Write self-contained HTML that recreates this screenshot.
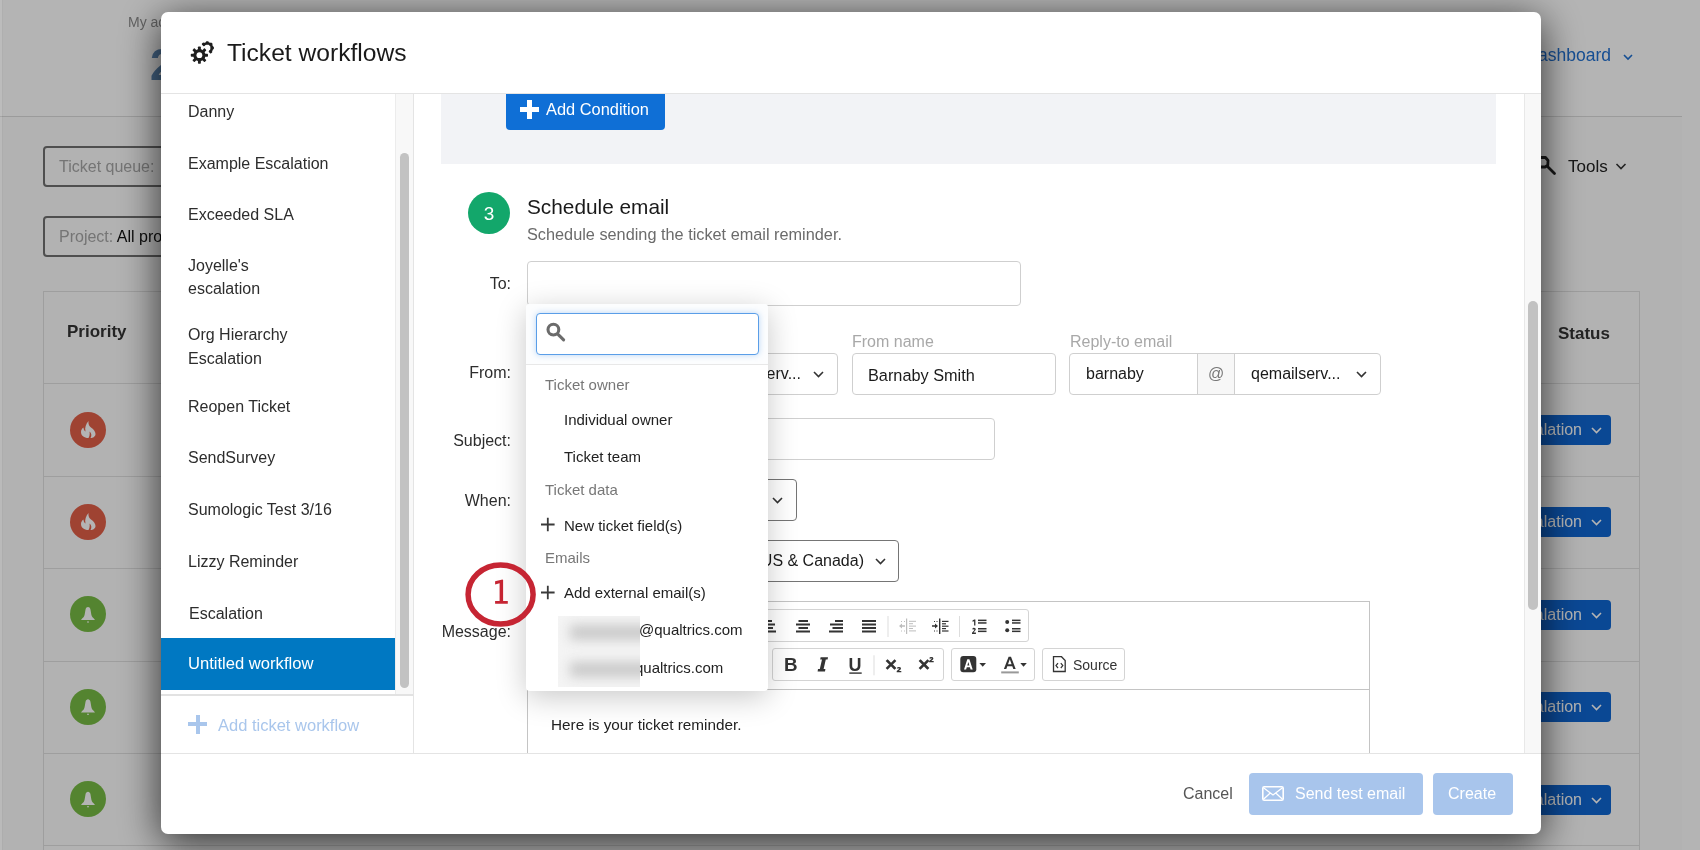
<!DOCTYPE html>
<html><head><meta charset="utf-8">
<style>
#mc,#bg{will-change:transform}
*{box-sizing:border-box;margin:0;padding:0}
html,body{width:1700px;height:850px;overflow:hidden}
body{font-family:"Liberation Sans",sans-serif;background:#fff;position:relative;color:#2b2b2b}
.a{position:absolute}
.t{position:absolute;white-space:nowrap;line-height:1}
#bg{position:absolute;left:0;top:0;width:1700px;height:850px;background:#fff}
#ov{position:absolute;left:0;top:0;width:1700px;height:850px;background:rgba(0,0,0,0.295)}
#modal{position:absolute;left:161px;top:12px;width:1380px;height:822px;background:#fff;border-radius:7px;box-shadow:0 8px 40px rgba(0,0,0,0.75)}
.side{font-size:16px;color:#2d2d2d;left:188px;margin-top:1px}
.lbl{font-size:16px;color:#2d2d2d;text-align:right;width:100px;left:411px}
.inp{position:absolute;border:1px solid #cfcfcf;border-radius:4px;background:#fff}
.dd{position:absolute;border:1px solid #757575;border-radius:4px;background:#fff}
.gl{font-size:15px;color:#777;left:545px}
.it{font-size:15px;color:#222;left:564px}
.chev{position:absolute}
.tb{position:absolute;border:1px solid #d4d4d4;border-radius:3px;background:#fff}
</style></head>
<body>
<div id="bg">
  
  <div class="t" style="left:128px;top:15px;font-size:14px;color:#8c8c8c">My account</div>
  <div class="t" style="left:150px;top:43px;font-size:44px;color:#5f8bb8;font-weight:bold">2</div>
  <div class="a" style="left:0;top:117px;width:1682px;height:733px;background:#fcfcfc"></div>
  <div class="a" style="left:0;top:116px;width:1682px;height:1px;background:#dcdcdc"></div>
  <div class="a" style="left:43px;top:146px;width:300px;height:41px;border:2px solid #707070;border-radius:4px"></div>
  <div class="t" style="left:59px;top:159px;font-size:16px;color:#a6a6a6">Ticket queue:</div>
  <div class="a" style="left:43px;top:216px;width:300px;height:41px;border:2px solid #707070;border-radius:4px"></div>
  <div class="t" style="left:59px;top:229px;font-size:16px;color:#a6a6a6">Project: <span style="color:#111">All projects</span></div>
  <div class="a" style="left:43px;top:291px;width:1597px;height:600px;border:1px solid #e0e0e0"></div>
  <div class="t" style="left:67px;top:323px;font-size:17px;font-weight:bold;color:#333">Priority</div>
  <div class="t" style="left:1558px;top:325px;font-size:17px;font-weight:bold;color:#333">Status</div>
  <div class="a" style="left:43px;top:383px;width:1597px;height:1px;background:#e0e0e0"></div>
  <div class="a" style="left:43px;top:476px;width:1597px;height:1px;background:#e0e0e0"></div>
  <div class="a" style="left:43px;top:568px;width:1597px;height:1px;background:#e0e0e0"></div>
  <div class="a" style="left:43px;top:661px;width:1597px;height:1px;background:#e0e0e0"></div>
  <div class="a" style="left:43px;top:753px;width:1597px;height:1px;background:#e0e0e0"></div>
  <div class="a" style="left:43px;top:845px;width:1597px;height:1px;background:#e0e0e0"></div>
  <div class="a" style="left:70px;top:412px;width:36px;height:36px;border-radius:50%;background:#e25f48"></div>
  <div class="a" style="left:70px;top:504px;width:36px;height:36px;border-radius:50%;background:#e25f48"></div>
  <div class="a" style="left:70px;top:596px;width:36px;height:36px;border-radius:50%;background:#78bc45"></div>
  <div class="a" style="left:70px;top:689px;width:36px;height:36px;border-radius:50%;background:#78bc45"></div>
  <div class="a" style="left:70px;top:781px;width:36px;height:36px;border-radius:50%;background:#78bc45"></div>
  <div class="t" style="left:1411px;top:47px;width:200px;text-align:right;font-size:17.5px;color:#1f6fd0">dashboard</div>
  <div class="t" style="left:1568px;top:158px;font-size:17px;color:#222">Tools</div>
  <div class="a" style="left:1480px;top:415px;width:131px;height:30px;background:#0f66d2;border-radius:4px"></div>
  <div class="a" style="left:1480px;top:507px;width:131px;height:30px;background:#0f66d2;border-radius:4px"></div>
  <div class="a" style="left:1480px;top:600px;width:131px;height:30px;background:#0f66d2;border-radius:4px"></div>
  <div class="a" style="left:1480px;top:692px;width:131px;height:30px;background:#0f66d2;border-radius:4px"></div>
  <div class="a" style="left:1480px;top:785px;width:131px;height:30px;background:#0f66d2;border-radius:4px"></div>

  <svg class="a" style="left:0;top:0" width="1700" height="850" viewBox="0 0 1700 850">
    <path d="M1624 55 L1628 59 L1632 55" fill="none" stroke="#1f6fd0" stroke-width="1.6"/>
    <path d="M1616.5 164 L1621 168.5 L1625.5 164" fill="none" stroke="#333" stroke-width="1.6"/>
    <g stroke="#222" stroke-width="2.8" fill="none" stroke-linejoin="round">
      <path d="M1539 157.5 L1545.5 157.5 L1548 160.5 L1547.8 165.2 L1545 167 L1538 167"/>
      <path d="M1547.5 166.5 L1554.5 173.5" stroke-linecap="round"/>
    </g>
    <g fill="#fff">
      <path transform="translate(81 421)" d="M7.5 17 C3 17 0 14.5 0 11 C0 9 1 7.5 2.5 6.5 C2.5 8.5 3.5 10 4.5 10.5 C3.5 6.5 5 3 7.5 0 C7 3.5 8.5 5.5 10 6.5 C13 8.5 14.5 11 14.5 13 C14.5 15.5 12 17 9.5 17 C11 15 10.5 12 8.5 10.5 C9 13 8.5 15.5 7.5 17 Z"/>
      <path transform="translate(81 513)" d="M7.5 17 C3 17 0 14.5 0 11 C0 9 1 7.5 2.5 6.5 C2.5 8.5 3.5 10 4.5 10.5 C3.5 6.5 5 3 7.5 0 C7 3.5 8.5 5.5 10 6.5 C13 8.5 14.5 11 14.5 13 C14.5 15.5 12 17 9.5 17 C11 15 10.5 12 8.5 10.5 C9 13 8.5 15.5 7.5 17 Z"/>
      <path transform="translate(81 606.6)" d="M7 0.3 C8.2 0.3 9 1.2 9.4 2.6 C10 5 10 8 11 10 C11.8 11.5 13.5 12.3 14 13.5 L0 13.5 C0.5 12.3 2.2 11.5 3 10 C4 8 4 5 4.6 2.6 C5 1.2 5.8 0.3 7 0.3 Z M6 14.8 L8 14.8 L8 15.8 L6 15.8 Z"/>
      <path transform="translate(81 699)" d="M7 0.3 C8.2 0.3 9 1.2 9.4 2.6 C10 5 10 8 11 10 C11.8 11.5 13.5 12.3 14 13.5 L0 13.5 C0.5 12.3 2.2 11.5 3 10 C4 8 4 5 4.6 2.6 C5 1.2 5.8 0.3 7 0.3 Z M6 14.8 L8 14.8 L8 15.8 L6 15.8 Z"/>
      <path transform="translate(81 791.5)" d="M7 0.3 C8.2 0.3 9 1.2 9.4 2.6 C10 5 10 8 11 10 C11.8 11.5 13.5 12.3 14 13.5 L0 13.5 C0.5 12.3 2.2 11.5 3 10 C4 8 4 5 4.6 2.6 C5 1.2 5.8 0.3 7 0.3 Z M6 14.8 L8 14.8 L8 15.8 L6 15.8 Z"/>
    </g>
    <g fill="none" stroke="#fff" stroke-width="1.6">
      <path d="M1592 428 L1596.5 432.5 L1601 428"/>
      <path d="M1592 520 L1596.5 524.5 L1601 520"/>
      <path d="M1592 613 L1596.5 617.5 L1601 613"/>
      <path d="M1592 705 L1596.5 709.5 L1601 705"/>
      <path d="M1592 798 L1596.5 802.5 L1601 798"/>
    </g>
  </svg>
  <div class="t" style="left:1482px;top:422px;width:100px;text-align:right;font-size:16px;color:#fff">Escalation</div>
  <div class="t" style="left:1482px;top:514px;width:100px;text-align:right;font-size:16px;color:#fff">Escalation</div>
  <div class="t" style="left:1482px;top:607px;width:100px;text-align:right;font-size:16px;color:#fff">Escalation</div>
  <div class="t" style="left:1482px;top:699px;width:100px;text-align:right;font-size:16px;color:#fff">Escalation</div>
  <div class="t" style="left:1482px;top:792px;width:100px;text-align:right;font-size:16px;color:#fff">Escalation</div>
</div>
<div id="ov"></div>
<div class="a" style="left:0;top:0;width:2px;height:850px;background:rgba(255,255,255,0.1)"></div><div class="a" style="left:2px;top:0;width:1px;height:850px;background:rgba(0,0,0,0.03)"></div>

<div id="modal"></div>
<!-- ===== modal content (page coords) ===== -->
<div id="mc">
  <!-- header -->
  <div class="t" style="left:227px;top:41px;font-size:24.6px;color:#1a1a1a">Ticket workflows</div>
  <div class="a" style="left:161px;top:93px;width:1380px;height:1px;background:#e4e4e4"></div>

  <!-- sidebar -->
  <div class="a" style="left:395px;top:94px;width:18px;height:601px;background:#f8f8f8;border-left:1px solid #ececec"></div>
  <div class="a" style="left:400px;top:153px;width:9px;height:535px;background:#c2c2c2;border-radius:5px"></div>
  <div class="a" style="left:413px;top:94px;width:1px;height:659px;background:#e4e4e4"></div>
  <div class="t side" style="top:103px">Danny</div>
  <div class="t side" style="top:155px">Example Escalation</div>
  <div class="t side" style="top:206px">Exceeded SLA</div>
  <div class="t side" style="top:257px">Joyelle's</div>
  <div class="t side" style="top:280px">escalation</div>
  <div class="t side" style="top:326px">Org Hierarchy</div>
  <div class="t side" style="top:350px">Escalation</div>
  <div class="t side" style="top:398px">Reopen Ticket</div>
  <div class="t side" style="top:449px">SendSurvey</div>
  <div class="t side" style="top:501px">Sumologic Test 3/16</div>
  <div class="t side" style="top:553px">Lizzy Reminder</div>
  <div class="t side" style="top:605px;left:189px">Escalation</div>
  <div class="a" style="left:161px;top:638px;width:234px;height:52px;background:#0078c2"></div>
  <div class="t side" style="top:655px;color:#fff;font-size:16.6px">Untitled workflow</div>
  <div class="a" style="left:161px;top:694px;width:252px;height:2px;background:#e2e2e2"></div>
  <div class="a" style="left:188px;top:722px;width:19px;height:4px;background:#a9c6ec"></div>
  <div class="a" style="left:196px;top:715px;width:4px;height:19px;background:#a9c6ec"></div>
  <div class="t" style="left:218px;top:717px;font-size:16.5px;color:#a9c6ec">Add ticket workflow</div>

  <!-- main scrollbar -->
  <div class="a" style="left:1524px;top:94px;width:17px;height:659px;background:#f8f8f8;border-left:1px solid #e8e8e8"></div>
  <div class="a" style="left:1528px;top:301px;width:10px;height:309px;background:#c2c2c2;border-radius:5px"></div>

  <!-- condition box -->
  <div class="a" style="left:441px;top:94px;width:1055px;height:70px;background:#f2f3f6"></div>
  <div class="a" style="left:506px;top:94px;width:159px;height:36px;background:#0f6fd6;border-radius:0 0 4px 4px"></div>
  <div class="a" style="left:520px;top:107px;width:19px;height:5px;background:#fff"></div>
  <div class="a" style="left:527px;top:100px;width:5px;height:19px;background:#fff"></div>
  <div class="t" style="left:546px;top:101px;font-size:16.4px;color:#fff">Add Condition</div>

  <!-- step 3 -->
  <div class="a" style="left:468px;top:192px;width:42px;height:42px;border-radius:50%;background:#13a76b"></div>
  <div class="t" style="left:468px;top:204px;width:42px;text-align:center;font-size:19px;color:#fff">3</div>
  <div class="t" style="left:527px;top:197px;font-size:20.8px;color:#1a1a1a">Schedule email</div>
  <div class="t" style="left:527px;top:226px;font-size:16.3px;color:#6b6b6b">Schedule sending the ticket email reminder.</div>

  <!-- To -->
  <div class="t lbl" style="top:276px">To:</div>
  <div class="inp" style="left:527px;top:261px;width:494px;height:45px"></div>

  <!-- From -->
  <div class="t lbl" style="top:365px">From:</div>
  <div class="inp" style="left:527px;top:353px;width:311px;height:42px"></div>
  <div class="t" style="left:601px;top:366px;width:200px;text-align:right;font-size:16px;color:#1a1a1a">qemailserv...</div>
  <svg class="a" style="left:812px;top:370px" width="13" height="9" viewBox="0 0 13 9"><path d="M2 2 L6.5 6.5 L11 2" fill="none" stroke="#333" stroke-width="1.6"/></svg>

  <div class="t" style="left:852px;top:334px;font-size:16px;color:#a8a8a8">From name</div>
  <div class="inp" style="left:852px;top:353px;width:204px;height:42px"></div>
  <div class="t" style="left:868px;top:367px;font-size:16.3px;color:#1a1a1a">Barnaby Smith</div>

  <div class="t" style="left:1070px;top:334px;font-size:16px;color:#a8a8a8">Reply-to email</div>
  <div class="inp" style="left:1069px;top:353px;width:312px;height:42px"></div>
  <div class="a" style="left:1197px;top:354px;width:38px;height:40px;background:#f7f7f7;border-left:1px solid #cfcfcf;border-right:1px solid #cfcfcf"></div>
  <div class="t" style="left:1197px;top:366px;width:38px;text-align:center;font-size:16px;color:#777">@</div>
  <div class="t" style="left:1086px;top:366px;font-size:16px;color:#1a1a1a">barnaby</div>
  <div class="t" style="left:1251px;top:366px;font-size:16px;color:#1a1a1a">qemailserv...</div>
  <svg class="a" style="left:1355px;top:370px" width="13" height="9" viewBox="0 0 13 9"><path d="M2 2 L6.5 6.5 L11 2" fill="none" stroke="#333" stroke-width="1.6"/></svg>

  <!-- Subject -->
  <div class="t lbl" style="top:433px">Subject:</div>
  <div class="inp" style="left:527px;top:418px;width:468px;height:42px"></div>

  <!-- When -->
  <div class="t lbl" style="top:493px">When:</div>
  <div class="dd" style="left:527px;top:479px;width:270px;height:42px"></div>
  <svg class="a" style="left:771px;top:496px" width="13" height="9" viewBox="0 0 13 9"><path d="M2 2 L6.5 6.5 L11 2" fill="none" stroke="#333" stroke-width="1.6"/></svg>
  <div class="dd" style="left:527px;top:540px;width:372px;height:42px"></div>
  <div class="t" style="left:664px;top:553px;width:200px;text-align:right;font-size:16px;color:#1a1a1a">(US &amp; Canada)</div>
  <svg class="a" style="left:874px;top:557px" width="13" height="9" viewBox="0 0 13 9"><path d="M2 2 L6.5 6.5 L11 2" fill="none" stroke="#333" stroke-width="1.6"/></svg>

  <!-- Message -->
  <div class="t lbl" style="top:624px">Message:</div>
  <div class="a" style="left:527px;top:601px;width:843px;height:152px;border:1px solid #c4c4c4;border-bottom:none;background:#fff"></div>
  <div class="a" style="left:528px;top:689px;width:841px;height:1px;background:#c4c4c4"></div>
  <div class="tb" style="left:700px;top:609px;width:329px;height:33px"></div>
  <div class="tb" style="left:772px;top:648px;width:172px;height:33px"></div>
  <div class="tb" style="left:951px;top:648px;width:84px;height:33px"></div>
  <div class="tb" style="left:1042px;top:648px;width:83px;height:33px"></div>
  <div class="t" style="left:1073px;top:658px;font-size:14px;color:#333">Source</div>

  <svg class="a" style="left:0;top:0" width="1700" height="850" viewBox="0 0 1700 850">
    <g fill="#333">
      <!-- align left (partially hidden) -->
      <rect x="764" y="620" width="8" height="2"/><rect x="764" y="623.5" width="11" height="2"/><rect x="764" y="627" width="9" height="2"/><rect x="764" y="630.5" width="12" height="2"/>
      <!-- align center -->
      <rect x="798.5" y="620" width="9.5" height="2"/><rect x="796" y="623.5" width="14" height="2"/><rect x="798.5" y="627" width="9.5" height="2"/><rect x="796" y="630.5" width="14" height="2"/>
      <!-- align right -->
      <rect x="835" y="620" width="8" height="2"/><rect x="830" y="623.5" width="13" height="2"/><rect x="832.5" y="627" width="10.5" height="2"/><rect x="829" y="630.5" width="14" height="2"/>
      <!-- justify -->
      <rect x="862" y="620" width="14" height="2"/><rect x="862" y="623.5" width="14" height="2"/><rect x="862" y="627" width="14" height="2"/><rect x="862" y="630.5" width="14" height="2"/>
    </g>
    <rect x="887.5" y="616" width="1" height="21" fill="#ddd"/>
    <rect x="959" y="616" width="1" height="21" fill="#ddd"/>
    <!-- outdent -->
    <g fill="#bdbdbd">
      <rect x="906" y="618.5" width="1.2" height="15.5"/>
      <rect x="909" y="620.8" width="7" height="1"/><rect x="909" y="623.2" width="4" height="1"/><rect x="909" y="625.6" width="7" height="1"/><rect x="909" y="628" width="4" height="1"/><rect x="909" y="630.4" width="7" height="1"/>
      <path d="M899 626 L902 623.5 L902 625.3 L905 625.3 L905 626.8 L902 626.8 L902 628.5 Z"/>
      <rect x="901" y="621" width="1" height="1"/><rect x="904" y="621" width="1" height="1"/><rect x="901" y="630.5" width="1" height="1"/><rect x="904" y="630.5" width="1" height="1"/>
    </g>
    <!-- indent -->
    <g fill="#333">
      <rect x="939" y="618.5" width="1.4" height="15.5"/>
      <rect x="942" y="620.8" width="6.5" height="1.2"/><rect x="942" y="623.2" width="4" height="1.2"/><rect x="942" y="625.6" width="6.5" height="1.2"/><rect x="942" y="628" width="4" height="1.2"/><rect x="942" y="630.4" width="6.5" height="1.2"/>
      <path d="M938 626 L935 623.5 L935 625.3 L932 625.3 L932 626.8 L935 626.8 L935 628.5 Z"/>
      <rect x="934" y="621" width="1" height="1"/><rect x="936.5" y="621" width="1" height="1"/><rect x="934" y="630.5" width="1" height="1"/><rect x="936.5" y="630.5" width="1" height="1"/>
    </g>
    <!-- numbered list -->
    <g fill="#333">
      <path d="M972.5 620.5 L974.2 619.6 L975.4 619.6 L975.4 625.5 L974.1 625.5 L974.1 621.2 L972.5 621.8 Z"/>
      <path d="M972.2 629.2 Q972.6 627.8 974 627.8 Q975.8 627.8 975.8 629.3 Q975.8 630.3 974.2 631.7 L973.5 632.6 L975.9 632.6 L975.9 634 L972 634 L972 632.8 L974 630.6 Q974.5 630 974.3 629.4 Q974 628.9 973.5 629.4 Z"/>
      <rect x="978" y="619.6" width="8.5" height="1.5"/><rect x="978" y="622.2" width="8.5" height="1.5"/>
      <rect x="978" y="628" width="8.5" height="1.5"/><rect x="978" y="630.6" width="8.5" height="1.5"/>
      <!-- bullets -->
      <circle cx="1007.2" cy="621.9" r="2"/><circle cx="1007.2" cy="630.3" r="2"/>
      <rect x="1012" y="619.6" width="8.5" height="1.5"/><rect x="1012" y="622.2" width="8.5" height="1.5"/>
      <rect x="1012" y="628" width="8.5" height="1.5"/><rect x="1012" y="630.6" width="8.5" height="1.5"/>
    </g>
    <!-- row 2 -->
    <text x="784" y="671.3" font-family="Liberation Sans" font-weight="bold" font-size="18.8" fill="#333">B</text>
    <path d="M820.6 657.2 L828 657.2 L827.6 659.5 L825.8 659.5 L823.6 669.1 L825.4 669.1 L825 671.4 L817.6 671.4 L818 669.1 L819.8 669.1 L822 659.5 L820.2 659.5 Z" fill="#333"/>
    <text x="848.5" y="670.5" font-family="Liberation Sans" font-weight="bold" font-size="18" fill="#333">U</text>
    <rect x="849.3" y="672.4" width="12.4" height="1.4" fill="#333"/>
    <rect x="873.5" y="655.3" width="1" height="20" fill="#ddd"/>
    <g stroke="#333" stroke-width="2.6" stroke-linecap="square">
      <path d="M887.5 661 L894.5 668 M894.5 661 L887.5 668"/>
      <path d="M920.5 661 L927.5 668 M927.5 661 L920.5 668"/>
    </g>
    <g fill="#333">
      <path d="M896.8 668.2 Q897.2 667 898.9 667 Q901 667 901 668.4 Q901 669.4 899.4 670.5 L899 670.9 L901.3 670.9 L901.3 672.2 L896.7 672.2 L896.7 671.1 L899.1 669.1 Q899.6 668.5 899 668.3 Q898.3 668.2 898.1 668.8 Z"/>
      <path d="M929.2 658.2 Q929.6 657 931.3 657 Q933.4 657 933.4 658.4 Q933.4 659.4 931.8 660.5 L931.4 660.9 L933.7 660.9 L933.7 662.2 L929.1 662.2 L929.1 661.1 L931.5 659.1 Q932 658.5 931.4 658.3 Q930.7 658.2 930.5 658.8 Z"/>
    </g>
    <!-- highlight A -->
    <rect x="960.3" y="656" width="16" height="16.2" rx="3" fill="#333"/>
    <path d="M964 669.5 L967.3 659.3 L969.4 659.3 L972.7 669.5 L970.6 669.5 L969.9 667.2 L966.8 667.2 L966.1 669.5 Z M967.3 665.4 L969.4 665.4 L968.35 662 Z" fill="#fff"/>
    <path d="M979.4 663 L986 663 L982.7 666.8 Z" fill="#333"/>
    <!-- font color A -->
    <path d="M1003.9 669 L1008.6 656.8 L1011 656.8 L1015.7 669 L1013.3 669 L1012.3 666.2 L1007.3 666.2 L1006.3 669 Z M1008 664.2 L1011.6 664.2 L1009.8 659.3 Z" fill="#333"/>
    <rect x="1001.2" y="671.4" width="17.6" height="2" fill="#999"/>
    <path d="M1020.3 663 L1026.8 663 L1023.5 666.8 Z" fill="#333"/>
    <!-- source doc -->
    <path d="M1053.5 656.7 L1061.5 656.7 L1065.2 660.5 L1065.2 671.5 L1053.5 671.5 Z" fill="none" stroke="#333" stroke-width="1.3"/>
    <path d="M1058 663.2 L1056 665.6 L1058 668 M1060.8 663.2 L1062.8 665.6 L1060.8 668" fill="none" stroke="#333" stroke-width="1.2"/>
  </svg>
  <div class="t" style="left:551px;top:717px;font-size:15.3px;color:#222">Here is your ticket reminder.</div>


  <!-- icon layer -->
  <svg class="a" style="left:0;top:0" width="1700" height="850" viewBox="0 0 1700 850">
    <g fill="#1f1f1f">
      <circle cx="199.4" cy="55.2" r="6.1"/>
      <g id="teeth">
      <rect x="197.95" y="46.6" width="2.9" height="3.6" rx="0.7" transform="rotate(0 199.4 55.2)"/>
      <rect x="197.95" y="46.6" width="2.9" height="3.6" rx="0.7" transform="rotate(45 199.4 55.2)"/>
      <rect x="197.95" y="46.6" width="2.9" height="3.6" rx="0.7" transform="rotate(90 199.4 55.2)"/>
      <rect x="197.95" y="46.6" width="2.9" height="3.6" rx="0.7" transform="rotate(135 199.4 55.2)"/>
      <rect x="197.95" y="46.6" width="2.9" height="3.6" rx="0.7" transform="rotate(180 199.4 55.2)"/>
      <rect x="197.95" y="46.6" width="2.9" height="3.6" rx="0.7" transform="rotate(225 199.4 55.2)"/>
      <rect x="197.95" y="46.6" width="2.9" height="3.6" rx="0.7" transform="rotate(270 199.4 55.2)"/>
      <rect x="197.95" y="46.6" width="2.9" height="3.6" rx="0.7" transform="rotate(315 199.4 55.2)"/>
      </g>
      <rect x="205.9" y="41.2" width="2.8" height="3.3" rx="0.8" transform="rotate(-46 207.2 47.9)"/>
      <rect x="205.9" y="41.2" width="2.8" height="3.3" rx="0.8" transform="rotate(0 207.2 47.9)"/>
      <rect x="205.9" y="41.2" width="2.8" height="3.3" rx="0.8" transform="rotate(44 207.2 47.9)"/>
      <rect x="205.9" y="41.2" width="2.8" height="3.3" rx="0.8" transform="rotate(90 207.2 47.9)"/>
      <rect x="205.9" y="41.2" width="2.8" height="3.3" rx="0.8" transform="rotate(138 207.2 47.9)"/>
      </g>
    <circle cx="199.4" cy="55.2" r="2.9" fill="#fff"/>
    <path d="M203.50 45.01 A4.7 4.7 0 1 1 210.09 51.60" fill="none" stroke="#1f1f1f" stroke-width="2.5"/>
  </svg>

  <!-- footer -->
  <div class="a" style="left:161px;top:753px;width:1380px;height:1px;background:#e4e4e4"></div>
  <div class="t" style="left:1183px;top:786px;font-size:16px;color:#555">Cancel</div>
  <div class="a" style="left:1249px;top:773px;width:174px;height:42px;background:#a8c5ec;border-radius:4px"></div>
  <svg class="a" style="left:1262px;top:786px" width="22" height="15" viewBox="0 0 22 15">
    <rect x="0.8" y="0.8" width="20.4" height="13.4" rx="1.5" fill="none" stroke="#fff" stroke-width="1.6"/>
    <path d="M1.5 1.8 L11 9 L20.5 1.8 M1.5 13.2 L8 7.2 M20.5 13.2 L14 7.2" fill="none" stroke="#fff" stroke-width="1.3"/>
  </svg>
  <div class="t" style="left:1295px;top:786px;font-size:16px;color:#fff">Send test email</div>
  <div class="a" style="left:1433px;top:773px;width:80px;height:42px;background:#a8c5ec;border-radius:4px"></div>
  <div class="t" style="left:1448px;top:786px;font-size:16px;color:#fff">Create</div>

  <!-- popup -->
  <div class="a" style="left:526px;top:304px;width:242px;height:387px;background:#fff;border-radius:4px;box-shadow:0 6px 30px rgba(0,0,0,0.22)"></div>
  <div class="a" style="left:526px;top:304px;width:242px;height:61px;background:#fcfdfe;border-radius:4px 4px 0 0;border-bottom:1px solid #e8e8e8"></div>
  <div class="a" style="left:536px;top:313px;width:223px;height:42px;border:1.5px solid #5a9ee8;border-radius:4px;background:#fff;box-shadow:0 0 6px rgba(90,158,232,0.4)"></div>
  <div class="t gl" style="top:377px">Ticket owner</div>
  <div class="t it" style="top:412px">Individual owner</div>
  <div class="t it" style="top:449px">Ticket team</div>
  <div class="t gl" style="top:482px">Ticket data</div>
  <div class="t it" style="top:518px">New ticket field(s)</div>
  <div class="t gl" style="top:550px">Emails</div>
  <div class="t it" style="top:585px">Add external email(s)</div>
  <div class="t" style="left:639px;top:622px;font-size:15px;color:#222">@qualtrics.com</div>
  <div class="t" style="left:635px;top:660px;font-size:15px;color:#222">qualtrics.com</div>

  <svg class="a" style="left:0;top:0" width="1700" height="850" viewBox="0 0 1700 850">
    <circle cx="553.4" cy="329.6" r="5.4" fill="none" stroke="#6b6b6b" stroke-width="3.1"/>
    <path d="M558.3 334.6 L563.6 339.9" stroke="#6b6b6b" stroke-width="3.1" stroke-linecap="round"/>
    <g stroke="#3a3a3a" stroke-width="1.8">
      <path d="M541 524.5 L554.6 524.5 M547.8 517.7 L547.8 531.3"/>
      <path d="M541 592.5 L554.6 592.5 M547.8 585.7 L547.8 599.3"/>
    </g>
  </svg>
  <div class="a" style="left:558px;top:616px;width:82px;height:71px;background:#f4f4f4;overflow:hidden">
    <div class="a" style="left:12px;top:9px;width:90px;height:15px;background:#c9c9c9;filter:blur(6px)"></div>
    <div class="a" style="left:12px;top:46px;width:90px;height:15px;background:#c9c9c9;filter:blur(6px)"></div>
  </div>

  <!-- annotation -->
  <svg class="a" style="left:460px;top:558px" width="82" height="74" viewBox="0 0 82 74">
    <ellipse cx="40.6" cy="36.5" rx="32.5" ry="29.5" fill="none" stroke="#c62533" stroke-width="5.5"/>
  </svg>
  <svg class="a" style="left:0;top:0" width="1700" height="850" viewBox="0 0 1700 850"><path d="M495.1 581.2 L502.5 579.6 L503.1 579.9 L503.1 600.9 L507.8 600.9 L507.8 603.8 L495.1 603.8 L495.1 600.9 L499.6 600.9 L499.6 583.3 L495.1 584.5 Z" fill="#c62533"/></svg>
</div>
</body></html>
